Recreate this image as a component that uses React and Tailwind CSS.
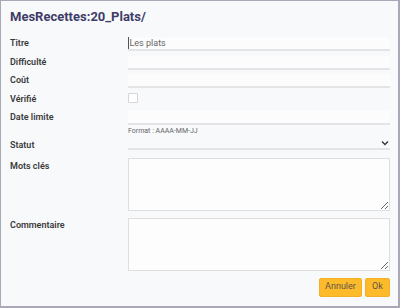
import React from 'react';

const font = { fontFamily: 'Roboto, "Liberation Sans", sans-serif' };

function Row({ label, children, className = '', labelClass = 'items-center' }) {
  return (
    <div className={`flex ${className}`}>
      <div className={`w-[118px] flex ${labelClass} text-[9px] font-semibold text-[#3a3a3a]`}>{label}</div>
      <div className="flex-1">{children}</div>
    </div>
  );
}

function Field({ value }) {
  return (
    <div className="h-[14px] bg-[#fcfcfd] border-b-2 border-[#e4e4e7] text-[9px] text-[#666] leading-[12px] flex items-center">
      {value}
    </div>
  );
}

export default function App() {
  return (
    <div className="w-[400px] h-[308px] border-t border-l border-r-2 border-b-2 border-[#aaa7b8] bg-[#f8f9fb] pl-[9px] pr-[8px]" style={font}>
      <h1 className="pt-[6px] text-[13px] leading-[20px] font-bold text-[#3f3c68]">MesRecettes:20_Plats/</h1>

      <div className="mt-[10px] flex flex-col">
        <Row label="Titre">
          <Field value={<span className="border-l border-[#555] pl-[0.5px]">Les plats</span>} />
        </Row>
        <Row label="Difficulté" className="mt-[4.5px]">
          <Field />
        </Row>
        <Row label="Coût" className="mt-[4.5px]">
          <Field />
        </Row>
        <Row label="Vérifié" className="mt-[4.5px] h-[14px]">
          <div className="w-[10px] h-[10px] mt-[0.5px] bg-white border border-[#d6d6d9] rounded-[1px]" />
        </Row>
        <Row label="Date limite" className="mt-[4px]">
          <Field />
        </Row>
        <div className="flex h-[10px]">
          <div className="w-[118px]" />
          <div className="text-[7px] leading-[10px] text-[#666] pt-[1px]">Format : AAAA-MM-JJ</div>
        </div>
        <Row label="Statut" labelClass="items-end leading-[10px]" className="mt-[1px] h-[14px]">
          <div className="h-[14px] border-b-2 border-[#e4e4e7] flex items-center justify-end pr-[1px]">
            <svg width="8" height="6" viewBox="0 0 8 6" className="mt-[3px]">
              <path d="M1 1.5 L4 4.5 L7 1.5" stroke="#333" strokeWidth="1.3" fill="none" />
            </svg>
          </div>
        </Row>
        <Row label="Mots clés" labelClass="items-start pt-[2px]" className="mt-[8px]">
          <textarea className="block w-full h-[53px] bg-[#fdfdfe] border border-[#dedee1] outline-none" />
        </Row>
        <Row label="Commentaire" labelClass="items-start pt-[1px]" className="mt-[7px]">
          <textarea className="block w-full h-[53px] bg-[#fdfdfe] border border-[#dedee1] outline-none" />
        </Row>
        <div className="mt-[7px] flex justify-end gap-[3px]">
          <button className="h-[19px] w-[43px] bg-[#fdbb2b] border border-[#f3b022] rounded-[2px] text-[9px] text-[#5f5548]">Annuler</button>
          <button className="h-[19px] w-[25px] bg-[#fdbb2b] border border-[#f3b022] rounded-[2px] text-[9px] text-[#5f5548]">Ok</button>
        </div>
      </div>
    </div>
  );
}
